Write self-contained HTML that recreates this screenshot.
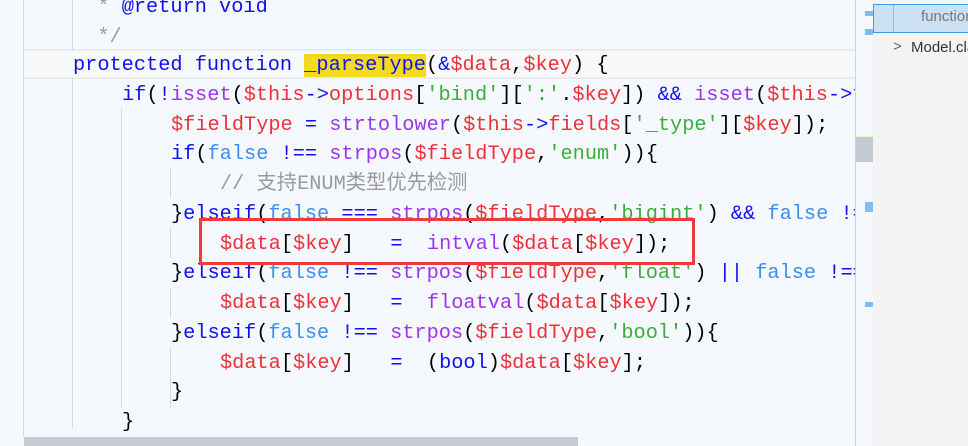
<!DOCTYPE html>
<html><head><meta charset="utf-8"><style>
*{margin:0;padding:0;box-sizing:border-box}
body{width:968px;height:446px;overflow:hidden;background:#f5f9fd;position:relative;font-family:"Liberation Mono","Noto Sans CJK SC",monospace;font-size:20.3px}
.g{position:absolute;width:1px;background:#d6d9dc}
.w{position:absolute;left:0;top:2px;width:856px;height:440px}
.ln{position:absolute;left:0;height:30px;line-height:30px;white-space:pre;color:#000}
.k{color:#1010f0}.f{color:#9b35f0}.v{color:#ef3038}.s{color:#3aae3a}.b{color:#3d8ef0}.c{color:#9a9a9a}
</style></head><body>
<div style="position:absolute;left:24px;top:49px;width:832px;height:30px;border-top:2px solid #e8eaec;border-bottom:2px solid #e8eaec;background:#f7f9fb"></div>
<div class="g" style="left:23px;top:0;height:437px"></div>
<div class="g" style="left:72px;top:0;height:50px"></div>
<div class="g" style="left:72px;top:78px;height:350px"></div>
<div class="g" style="left:121px;top:108px;height:300px"></div>
<div class="g" style="left:170px;top:168px;height:30px"></div>
<div class="g" style="left:170px;top:228px;height:30px"></div>
<div class="g" style="left:170px;top:288px;height:30px"></div>
<div class="g" style="left:170px;top:348px;height:60px"></div>
<div class="w">
<div class="ln" style="top:-9px;left:73px"><span class="c">  * </span><span class="k">@return void</span></div>
<div class="ln" style="top:21px;left:73px"><span class="c">  */</span></div>
<div class="ln" style="top:49px;left:73px"><span class="k">protected function </span><span style="background:#f4da1e;color:#1010f0">_parseType</span>(<span class="k">&amp;</span><span class="v">$data</span>,<span class="v">$key</span>) {</div>
<div class="ln" style="top:79px;left:122px"><span class="k">if</span>(<span class="k">!</span><span class="f">isset</span>(<span class="v">$this</span><span class="k">-&gt;</span><span class="v">options</span>[<span class="s">'bind'</span>][<span class="s">':'</span>.<span class="v">$key</span>]) <span class="k">&amp;&amp;</span> <span class="f">isset</span>(<span class="v">$this</span><span class="k">-&gt;</span><span class="v">fi</span></div>
<div class="ln" style="top:109px;left:171px"><span class="v">$fieldType</span> <span class="k">=</span> <span class="f">strtolower</span>(<span class="v">$this</span><span class="k">-&gt;</span><span class="v">fields</span>[<span class="s">'_type'</span>][<span class="v">$key</span>]);</div>
<div class="ln" style="top:138px;left:171px"><span class="k">if</span>(<span class="b">false</span> <span class="k">!==</span> <span class="f">strpos</span>(<span class="v">$fieldType</span>,<span class="s">'enum'</span>)){</div>
<div class="ln" style="top:168px;left:220px"><span class="c">// 支持ENUM类型优先检测</span></div>
<div class="ln" style="top:198px;left:171px">}<span class="k">elseif</span>(<span class="b">false</span> <span class="k">===</span> <span class="f">strpos</span>(<span class="v">$fieldType</span>,<span class="s">'bigint'</span>) <span class="k">&amp;&amp;</span> <span class="b">false</span> <span class="k">!==</span></div>
<div class="ln" style="top:228px;left:220px"><span class="v">$data</span>[<span class="v">$key</span>]   <span class="k">=</span>  <span class="f">intval</span>(<span class="v">$data</span>[<span class="v">$key</span>]);</div>
<div class="ln" style="top:257px;left:171px">}<span class="k">elseif</span>(<span class="b">false</span> <span class="k">!==</span> <span class="f">strpos</span>(<span class="v">$fieldType</span>,<span class="s">'float'</span>) <span class="k">||</span> <span class="b">false</span> <span class="k">!==</span></div>
<div class="ln" style="top:287px;left:220px"><span class="v">$data</span>[<span class="v">$key</span>]   <span class="k">=</span>  <span class="f">floatval</span>(<span class="v">$data</span>[<span class="v">$key</span>]);</div>
<div class="ln" style="top:317px;left:171px">}<span class="k">elseif</span>(<span class="b">false</span> <span class="k">!==</span> <span class="f">strpos</span>(<span class="v">$fieldType</span>,<span class="s">'bool'</span>)){</div>
<div class="ln" style="top:347px;left:220px"><span class="v">$data</span>[<span class="v">$key</span>]   <span class="k">=</span>  (<span class="k">bool</span>)<span class="v">$data</span>[<span class="v">$key</span>];</div>
<div class="ln" style="top:376px;left:171px">}</div>
<div class="ln" style="top:406px;left:122px">}</div>
</div>
<div style="position:absolute;left:199px;top:218px;width:496px;height:47px;border:3px solid #ee3b3b"></div>

<div style="position:absolute;left:24px;top:437px;width:554px;height:9px;background:#c4ccd2"></div>
<div style="position:absolute;left:855px;top:0;width:1px;height:446px;background:#d0d3d6"></div>
<div style="position:absolute;left:856px;top:0;width:17px;height:446px;background:#f5f9fd"></div>
<div style="position:absolute;left:856px;top:136px;width:17px;height:26px;background:#c2cad1;border-top:1px solid #f4efc0"></div>
<div style="position:absolute;left:865px;top:11px;width:8px;height:5px;background:#7fbdf5"></div>
<div style="position:absolute;left:865px;top:29px;width:8px;height:6px;background:#7fbdf5"></div>
<div style="position:absolute;left:865px;top:202px;width:8px;height:10px;background:#7fbdf5"></div>
<div style="position:absolute;left:865px;top:302px;width:8px;height:5px;background:#7fbdf5"></div>
<div style="position:absolute;left:873px;top:0;width:95px;height:446px;background:#f4f4f4"></div>
<div style="position:absolute;left:873px;top:4px;width:100px;height:29px;background:#cce0f4;border:1px solid #3d9be9"></div>
<div style="position:absolute;left:893px;top:5px;width:1px;height:27px;background:#9fb8cf"></div>
<div style="position:absolute;left:921px;top:8px;font-family:'Liberation Sans','Noto Sans CJK SC',sans-serif;font-size:15px;color:#777;white-space:nowrap">function</div>
<div style="position:absolute;left:893px;top:38px;font-family:'Liberation Sans',sans-serif;font-size:15px;color:#666">&gt;</div>
<div style="position:absolute;left:911px;top:39px;font-family:'Liberation Sans',sans-serif;font-size:15px;color:#333;white-space:nowrap">Model.class</div>
</body></html>
